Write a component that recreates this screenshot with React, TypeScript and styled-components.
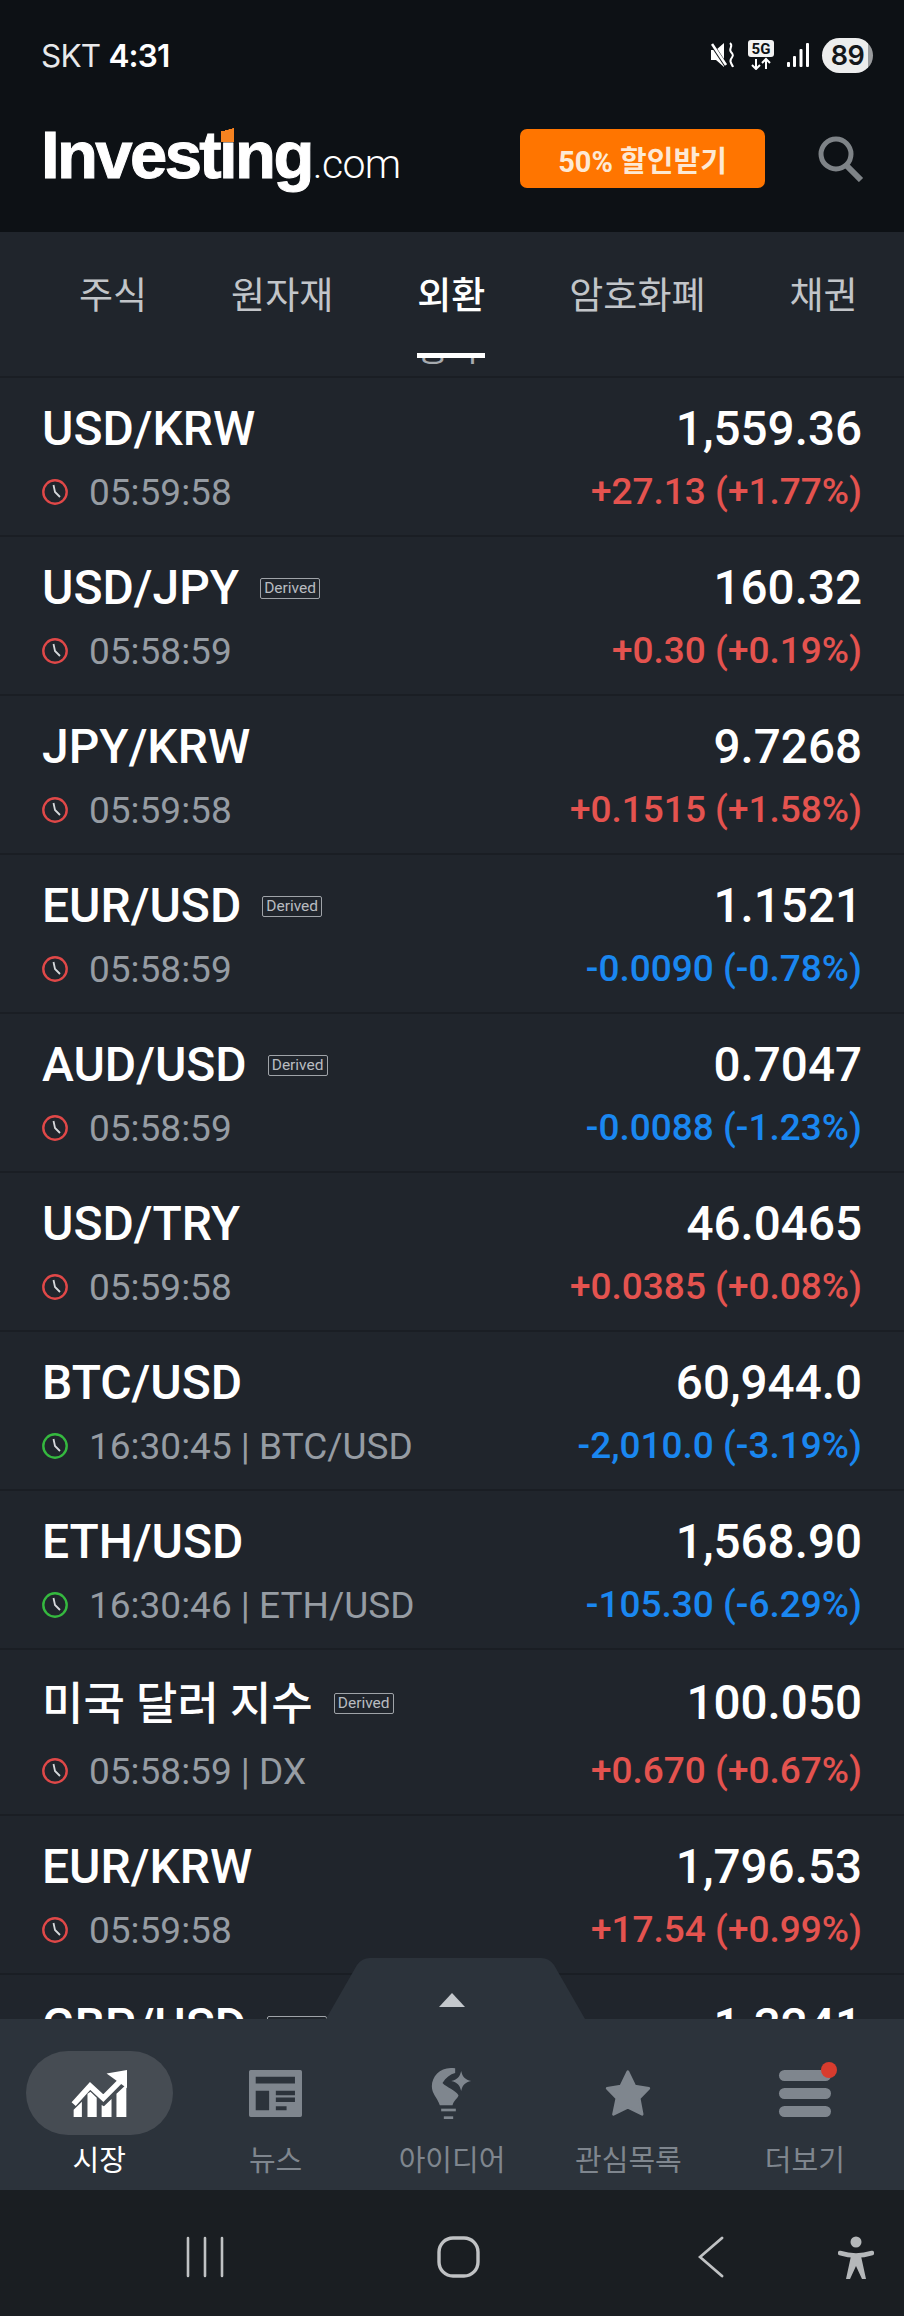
import React from 'react';
import styled, {createGlobalStyle} from 'styled-components';

const colors = {
    top: '#0d1115',
    panel: '#20252c',
    line: '#1a1e24',
    nav: '#2c333b',
    system: '#1a1e22',
    red: '#e4534f',
    blue: '#1a87f0',
    green: '#35b93f',
    clockRed: '#e04848',
    grey: '#969ca3',
    muted: '#7f868e',
    sysIcon: '#c0c2c4',
};

const GlobalStyle = createGlobalStyle`
  html, body {
    margin: 0;
    padding: 0;
    background: ${colors.panel};
  }
  * {
    box-sizing: border-box;
  }
`;

const Page = styled.div`
  width: 904px;
  height: 2316px;
  display: flex;
  flex-direction: column;
  overflow: hidden;
  font-family: Roboto, "Noto Sans CJK KR", sans-serif;
  color: #fff;
`;

const TopArea = styled.header`
  height: 232px;
  flex: none;
  background: ${colors.top};
  display: flex;
  flex-direction: column;
`;

const StatusBar = styled.div`
  height: 110px;
  flex: none;
  padding: 0 31px 0 41px;
  display: flex;
  align-items: center;
  justify-content: space-between;
`;

const Carrier = styled.div`
  font-family: Inter, Roboto, sans-serif;
  font-size: 31.5px;
  color: #e8e9ea;
  font-weight: 400;
  letter-spacing: -0.8px;

  b {
    font-weight: 600;
    color: #fff;
  }
`;

const StatusIcons = styled.div`
  display: flex;
  align-items: center;
  gap: 13px;
`;

const Battery = styled.div`
  width: 51px;
  height: 35px;
  border-radius: 18px;
  background: linear-gradient(90deg, #eceded 91%, #9a9c9e 91%);
  color: #14171a;
  font: 600 27px Inter, Roboto, sans-serif;
  letter-spacing: -0.5px;
  display: flex;
  align-items: center;
  justify-content: center;
`;

const BrandRow = styled.div`
  flex: 1;
  padding: 0 40px 25px 41px;
  display: flex;
  align-items: center;
`;

const Logo = styled.div`
  position: relative;
  margin-bottom: 9px;
  font-family: "Liberation Sans", sans-serif;
  font-size: 67px;
  line-height: 1;
  font-weight: 700;
  letter-spacing: -2.6px;
  -webkit-text-stroke: 1px #fff;
  white-space: nowrap;

  span {
    font-family: Roboto, sans-serif;
    font-weight: 300;
    font-size: 41px;
    letter-spacing: -0.6px;
    -webkit-text-stroke: 0;
    margin-left: 1px;
  }
`;

const LogoAccent = styled.i`
  position: absolute;
  left: 180px;
  top: 6px;
  width: 13px;
  height: 15px;
  background: linear-gradient(165deg, ${colors.top} 24%, #f58220 25%);
`;

const PromoButton = styled.div`
  margin-left: auto;
  width: 245px;
  height: 59px;
  border-radius: 7px;
  background: #ff7500;
  color: #fde9d4;
  font-size: 29px;
  font-weight: 700;
  display: flex;
  align-items: center;
  justify-content: center;
`;

const SearchBox = styled.div`
  margin-left: 53px;
  width: 46px;
  height: 46px;
  flex: none;
  display: flex;
`;

const Tabs = styled.nav`
  height: 146px;
  flex: none;
  background: ${colors.panel};
  display: flex;
  gap: 84px;
  padding: 40px 0 0 79px;
  border-bottom: 2px solid ${colors.line};
`;

const Tab = styled.div<{$active?: boolean}>`
  position: relative;
  height: 50px;
  font-size: 37px;
  line-height: 50px;
  font-weight: ${p => (p.$active ? 500 : 400)};
  color: ${p => (p.$active ? '#fff' : '#c2c5c9')};
`;

const TabUnderline = styled.div`
  position: absolute;
  left: 0;
  width: 68px;
  top: 81px;
  height: 5px;
  background: #fff;
`;

const TabGhost = styled.div`
  position: absolute;
  left: 0;
  width: 68px;
  top: 86px;
  height: 9px;
  overflow: hidden;
  font-size: 34px;
  font-weight: 400;
  line-height: 40px;
  color: #a6aaaf;
  white-space: nowrap;

  span {
    display: block;
    margin-top: -29px;
  }
`;

const List = styled.main`
  flex: 1;
  min-height: 0;
  overflow: hidden;
  background: ${colors.panel};
`;

const Row = styled.div<{$tall?: boolean}>`
  height: ${p => (p.$tall ? 166 : 159)}px;
  padding: ${p => (p.$tall ? 27 : 25)}px 42px 0;
  border-bottom: 2px solid ${colors.line};
  display: flex;
  justify-content: space-between;
`;

const Column = styled.div<{$tall?: boolean; $end?: boolean}>`
  display: flex;
  flex-direction: column;
  align-items: ${p => (p.$end ? 'flex-end' : 'flex-start')};
  gap: ${p => (p.$tall ? 17 : 12)}px;
`;

const NameLine = styled.div`
  display: flex;
  align-items: center;
  height: 52px;
`;

const Name = styled.div<{$tall?: boolean}>`
  font-size: ${p => (p.$tall ? 45 : 48)}px;
  line-height: 52px;
  font-weight: 500;
  color: #fff;
  padding-top: ${p => (p.$tall ? 4 : 0)}px;
`;

const Derived = styled.span`
  margin-left: 21px;
  height: 21px;
  padding: 0 3px;
  border: 1px solid #9fa3a8;
  border-radius: 2px;
  font-size: 15.5px;
  line-height: 19px;
  color: #b8bcc0;
`;

const TimeLine = styled.div`
  display: flex;
  align-items: center;
  height: 50px;
  font-size: 37px;
  color: ${colors.grey};
`;

const ClockIcon = styled.svg`
  width: 26px;
  height: 26px;
  margin-right: 21px;
  flex: none;
`;

const Price = styled.div`
  font-size: 47.6px;
  line-height: 52px;
  font-weight: 500;
  color: #fff;
`;

const Change = styled.div<{$up: boolean}>`
  font-size: 37px;
  line-height: 50px;
  font-weight: 500;
  color: ${p => (p.$up ? colors.red : colors.blue)};
`;

const BottomNav = styled.div`
  position: relative;
  height: 171px;
  flex: none;
  background: ${colors.nav};
  display: grid;
  grid-template-columns: repeat(5, 1fr);
  padding: 0 11px;
`;

const Handle = styled.svg`
  position: absolute;
  left: 326px;
  top: -61px;
  width: 259px;
  height: 61px;
`;

const NavItem = styled.div<{$active?: boolean}>`
  display: flex;
  flex-direction: column;
  align-items: center;
  padding-top: 32px;
  font-size: 29px;
  line-height: 38px;
  color: ${p => (p.$active ? '#fff' : colors.muted)};
`;

const NavIcon = styled.div<{$active?: boolean}>`
  width: 147px;
  height: 84px;
  border-radius: 42px;
  background: ${p => (p.$active ? '#464c53' : 'transparent')};
  display: flex;
  align-items: center;
  justify-content: center;
  margin-bottom: 7px;

  svg {
    overflow: visible;
  }
`;

const SystemBar = styled.div`
  height: 126px;
  flex: none;
  background: ${colors.system};
  display: flex;
  align-items: flex-start;
  padding: 46px 0 0 186px;
`;

const SystemIcon = styled.svg<{$gap?: number}>`
  flex: none;
  margin-left: ${p => p.$gap ?? 0}px;
`;

interface Quote {
    name: string;
    derived?: boolean;
    time: string;
    live?: boolean;
    price: string;
    change: string;
    up: boolean;
    tall?: boolean;
}

const quotes: Quote[] = [
    {name: 'USD/KRW', time: '05:59:58', price: '1,559.36', change: '+27.13 (+1.77%)', up: true},
    {name: 'USD/JPY', derived: true, time: '05:58:59', price: '160.32', change: '+0.30 (+0.19%)', up: true},
    {name: 'JPY/KRW', time: '05:59:58', price: '9.7268', change: '+0.1515 (+1.58%)', up: true},
    {name: 'EUR/USD', derived: true, time: '05:58:59', price: '1.1521', change: '-0.0090 (-0.78%)', up: false},
    {name: 'AUD/USD', derived: true, time: '05:58:59', price: '0.7047', change: '-0.0088 (-1.23%)', up: false},
    {name: 'USD/TRY', time: '05:59:58', price: '46.0465', change: '+0.0385 (+0.08%)', up: true},
    {name: 'BTC/USD', time: '16:30:45 | BTC/USD', live: true, price: '60,944.0', change: '-2,010.0 (-3.19%)', up: false},
    {name: 'ETH/USD', time: '16:30:46 | ETH/USD', live: true, price: '1,568.90', change: '-105.30 (-6.29%)', up: false},
    {name: '미국 달러 지수', derived: true, time: '05:58:59 | DX', price: '100.050', change: '+0.670 (+0.67%)', up: true, tall: true},
    {name: 'EUR/KRW', time: '05:59:58', price: '1,796.53', change: '+17.54 (+0.99%)', up: true},
    {name: 'GBP/USD', derived: true, time: '05:58:59', price: '1.3241', change: '+0.0021 (+0.16%)', up: true},
];

const tabs = [
    {label: '주식'},
    {label: '원자재'},
    {label: '외환', active: true},
    {label: '암호화폐'},
    {label: '채권'},
];

const Clock: React.FC<{live?: boolean}> = ({live}) => (
    <ClockIcon viewBox="0 0 26 26">
        <circle cx="13" cy="13" r="11.7" fill="none" stroke={live ? colors.green : colors.clockRed} strokeWidth="2.4"/>
        <path d="M11.5 6 L13 13 L18 18" fill="none" stroke="#d5d8db" strokeWidth="1.8"/>
    </ClockIcon>
);

const App: React.FC = () => {
    return (
        <Page>
            <GlobalStyle/>
            <TopArea>
                <StatusBar>
                    <Carrier>SKT <b>4:31</b></Carrier>
                    <StatusIcons>
                        <svg width="24" height="26" viewBox="0 0 24 26">
                            <path d="M0 8h5l8-7v24l-8-7H0z" fill="#fff"/>
                            <path d="M0 1l16 24" stroke={colors.top} strokeWidth="4"/>
                            <path d="M1 2l14 21" stroke="#fff" strokeWidth="2.6"/>
                            <path d="M19 1c4 3-2 6 1 9s2 4 0 7 1 5 2 8" fill="none" stroke="#fff" strokeWidth="2"/>
                        </svg>
                        <svg width="26" height="30" viewBox="0 0 26 30">
                            <rect x="0" y="0" width="26" height="17" rx="3" fill="#f2f2f2"/>
                            <text x="13" y="14" textAnchor="middle" fontFamily="Roboto" fontWeight="700" fontSize="15" fill="#0d1115">5G</text>
                            <path d="M8 19v10M4 25l4 4 4-4M18 29V19M14 23l4-4 4 4" fill="none" stroke="#fff" strokeWidth="2"/>
                        </svg>
                        <svg width="22" height="24" viewBox="0 0 22 24">
                            <rect x="0" y="19" width="3" height="5" rx="1" fill="#fff"/>
                            <rect x="6" y="13" width="3" height="11" rx="1" fill="#fff"/>
                            <rect x="12.5" y="6" width="3" height="18" rx="1" fill="#fff"/>
                            <rect x="19" y="0" width="3" height="24" rx="1" fill="#fff"/>
                        </svg>
                        <Battery>89</Battery>
                    </StatusIcons>
                </StatusBar>
                <BrandRow>
                    <Logo>Investing<span>.com</span><LogoAccent/></Logo>
                    <PromoButton>50% 할인받기</PromoButton>
                    <SearchBox>
                        <svg width="46" height="46" viewBox="0 0 46 46">
                            <circle cx="18" cy="18" r="15" fill="none" stroke="#7e8387" strokeWidth="5"/>
                            <path d="M28 29l15 15" stroke="#7e8387" strokeWidth="6"/>
                        </svg>
                    </SearchBox>
                </BrandRow>
            </TopArea>

            <Tabs>
                {tabs.map(tab => (
                    <Tab key={tab.label} $active={tab.active}>
                        {tab.label}
                        {tab.active && <TabGhost><span>통화</span></TabGhost>}
                        {tab.active && <TabUnderline/>}
                    </Tab>
                ))}
            </Tabs>

            <List>
                {quotes.map(q => (
                    <Row key={q.name} $tall={q.tall}>
                        <Column $tall={q.tall}>
                            <NameLine>
                                <Name $tall={q.tall}>{q.name}</Name>
                                {q.derived && <Derived>Derived</Derived>}
                            </NameLine>
                            <TimeLine>
                                <Clock live={q.live}/>
                                {q.time}
                            </TimeLine>
                        </Column>
                        <Column $tall={q.tall} $end>
                            <Price>{q.price}</Price>
                            <Change $up={q.up}>{q.change}</Change>
                        </Column>
                    </Row>
                ))}
            </List>

            <BottomNav>
                <Handle viewBox="0 0 259 61">
                    <path d="M0 61 L31 7 Q36 0 44 0 H215 Q223 0 228 7 L259 61 Z" fill={colors.nav}/>
                    <path d="M126 35 L139 49 H113 Z" fill="#c4c8cc"/>
                </Handle>
                <NavItem $active>
                    <NavIcon $active>
                        <svg width="55" height="47" viewBox="0 0 167 142" fill="#fff">
                            <path d="M5 103 L55 48 L95 85 L145 35" fill="none" stroke="#fff" strokeWidth="17"/>
                            <path d="M105 10 L167 0 L167 55 Z"/>
                            <path d="M5 142V120L30 96V142ZM47 142V72L56 66L75 84V142ZM90 142V106L97 110L120 88V142ZM135 142V72L165 44V142Z"/>
                        </svg>
                    </NavIcon>
                    시장
                </NavItem>
                <NavItem>
                    <NavIcon>
                        <svg width="53" height="47" viewBox="0 0 158 140">
                            <path
                                fillRule="evenodd"
                                fill={colors.muted}
                                d="M5 0H153a5 5 0 0 1 5 5V135a5 5 0 0 1-5 5H5a5 5 0 0 1-5-5V5a5 5 0 0 1 5-5ZM20 20V40H137V20ZM20 62V120H60V62ZM80 62V75H137V62ZM80 82V95H137V82ZM80 108V120H112V108Z"
                            />
                        </svg>
                    </NavIcon>
                    뉴스
                </NavItem>
                <NavItem>
                    <NavIcon>
                        <svg width="43" height="52" viewBox="0 0 118 156" fill={colors.muted}>
                            <path d="M70 4 C30 -4 0 25 0 58 C0 80 15 90 24 115 H62 C66 100 78 95 80 85 C70 68 45 62 32 48 C42 32 55 22 70 18 Z"/>
                            <path d="M88 12 C92 30 100 38 118 42 C100 46 92 54 88 72 C84 54 76 46 58 42 C76 38 84 30 88 12 Z"/>
                            <rect x="28" y="125" width="44" height="8"/>
                            <rect x="36" y="148" width="28" height="8"/>
                        </svg>
                    </NavIcon>
                    아이디어
                </NavItem>
                <NavItem>
                    <NavIcon>
                        <svg width="48" height="46" viewBox="0 0 133 138">
                            <path
                                fill={colors.muted}
                                stroke={colors.muted}
                                strokeWidth="8"
                                strokeLinejoin="round"
                                d="M66 5 L87 48 L129 55 L100 85 L109 133 L66 112 L23 133 L33 85 L4 55 L45 48 Z"
                            />
                        </svg>
                    </NavIcon>
                    관심목록
                </NavItem>
                <NavItem>
                    <NavIcon>
                        <svg width="52" height="47" viewBox="0 0 52 47">
                            <rect x="0" y="0" width="52" height="11" rx="5.5" fill={colors.muted}/>
                            <rect x="0" y="18" width="52" height="11" rx="5.5" fill={colors.muted}/>
                            <rect x="0" y="36" width="52" height="11" rx="5.5" fill={colors.muted}/>
                            <circle cx="50" cy="0" r="8" fill="#d83c2e"/>
                        </svg>
                    </NavIcon>
                    더보기
                </NavItem>
            </BottomNav>

            <SystemBar>
                <SystemIcon width="38" height="42" viewBox="0 0 38 42">
                    <path d="M2 2V40M19 2V40M36 2V40" stroke={colors.sysIcon} strokeWidth="2.6" strokeLinecap="round"/>
                </SystemIcon>
                <SystemIcon $gap={213} width="43" height="42" viewBox="0 0 43 42">
                    <rect x="2" y="2" width="39" height="38" rx="14" fill="none" stroke={colors.sysIcon} strokeWidth="3.4"/>
                </SystemIcon>
                <SystemIcon $gap={218} width="26" height="42" viewBox="0 0 26 42">
                    <path d="M24 2L2 21L24 40" fill="none" stroke={colors.sysIcon} strokeWidth="2.8" strokeLinecap="round"/>
                </SystemIcon>
                <SystemIcon $gap={114} width="36" height="44" viewBox="0 0 36 44">
                    <circle cx="18" cy="6" r="5.5" fill="#b5b8ba"/>
                    <path d="M2 17 Q18 22 34 17" fill="none" stroke="#b5b8ba" strokeWidth="4.5" strokeLinecap="round"/>
                    <path d="M13 20 H23 L28 43 H24 L18 30 L12 43 H8 Z" fill="#b5b8ba"/>
                </SystemIcon>
            </SystemBar>
        </Page>
    );
};

export default App;
